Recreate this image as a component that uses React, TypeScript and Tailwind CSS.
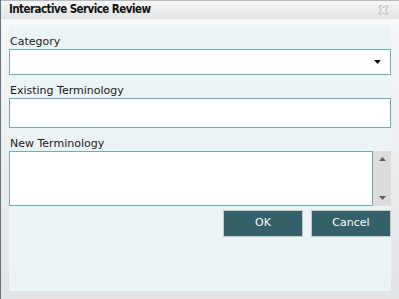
const font = { fontFamily: '"DejaVu Sans", Verdana, sans-serif' };
const titleFont = { fontFamily: '"DejaVu Sans Condensed", "Liberation Sans", sans-serif' };

function CloseIcon() {
  return (
    <svg width="11" height="10" viewBox="0 0 11 10" className="block">
      <path
        d="M1 1.5 L3 0.5 L5.5 3 L8 0.5 L10 1.5 L7.5 5 L10 8.5 L8 9.5 L5.5 7 L3 9.5 L1 8.5 L3.5 5 Z"
        fill="#f4f4f4"
        stroke="#a9a9a9"
        strokeWidth="0.9"
        strokeLinejoin="round"
      />
    </svg>
  );
}

function Triangle({ up, color }: { up?: boolean; color: string }) {
  return (
    <svg width="7" height="4" viewBox="0 0 7 4" className="block">
      <path d={up ? "M0 4 L3.5 0 L7 4 Z" : "M0 0 L7 0 L3.5 4 Z"} fill={color} />
    </svg>
  );
}

export default function App() {
  return (
    <div
      className="w-[399px] h-[299px] flex flex-col border-l border-[#5d7483] bg-gradient-to-b from-[#f6f8f9] to-[#e1e3e5] text-[#1a1a1a] overflow-hidden"
      style={font}
    >
      <div className="h-[19px] shrink-0 flex items-center justify-between pl-[8px] pr-[10px] border-t border-[#b4bcc1] bg-gradient-to-b from-[#f7f7f7] to-[#e1e3e4]">
        <span className="text-[11.5px] font-bold leading-none tracking-[-0.55px] text-[#111]" style={titleFont}>
          Interactive Service Review
        </span>
        <CloseIcon />
      </div>
      <div className="flex-1 px-[8px] pt-[6px] pb-[8px] flex">
        <div className="flex-1 bg-[#ecf3f5] flex flex-col pt-[10px] text-[11px]">
          <label className="leading-[14px] pl-[1px]">Category</label>
          <div className="h-[26px] bg-white border border-[#72aab4] flex items-center justify-end pr-[9px]">
            <Triangle color="#111" />
          </div>

          <label className="leading-[14px] pl-[1px] mt-[9px]">Existing Terminology</label>
          <div className="h-[30px] bg-white border border-[#72aab4]" />

          <label className="leading-[14px] pl-[1px] mt-[9px]">New Terminology</label>
          <div className="h-[55px] flex">
            <div className="flex-1 bg-white border border-[#72aab4]" />
            <div className="w-[18px] bg-[#dcdcdc] flex flex-col items-center justify-between py-[6px]">
              <Triangle up color="#5e5e5e" />
              <Triangle color="#5e5e5e" />
            </div>
          </div>

          <div className="mt-[4px] flex justify-end gap-[8px]">
            <button className="w-[80px] h-[27px] bg-[#336069] border border-[#c4c8ca] text-white text-[11px]">
              OK
            </button>
            <button className="w-[80px] h-[27px] bg-[#336069] border border-[#c4c8ca] text-white text-[11px]">
              Cancel
            </button>
          </div>
        </div>
      </div>
    </div>
  );
}
